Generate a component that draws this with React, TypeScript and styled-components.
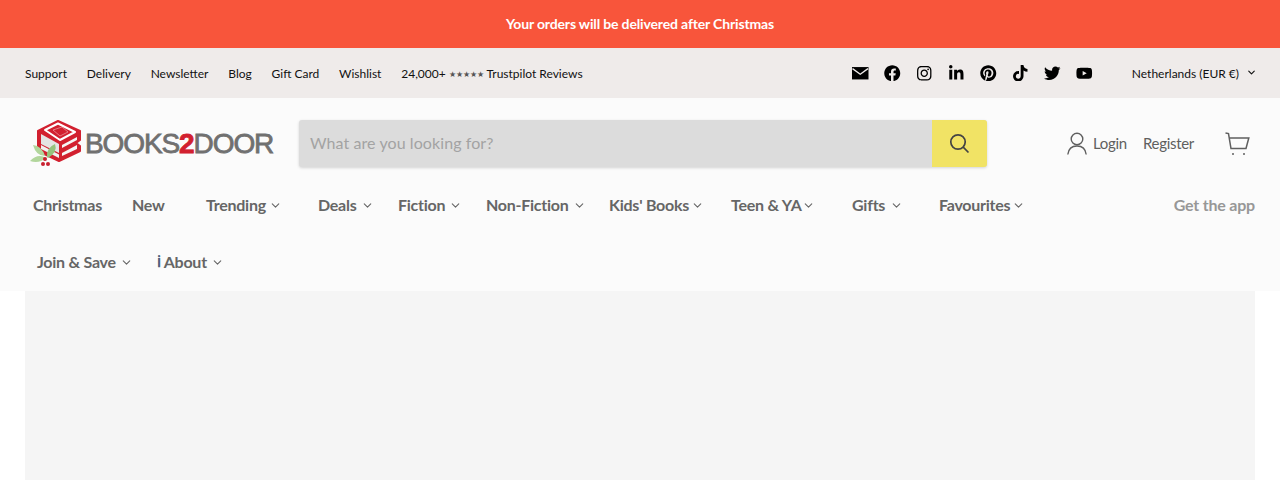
import React from "react";
import styled, { createGlobalStyle } from "styled-components";
import { FaFacebook, FaInstagram, FaLinkedinIn, FaPinterest, FaTiktok, FaTwitter, FaYoutube } from "react-icons/fa";
import { FiChevronDown } from "react-icons/fi";

const Global = createGlobalStyle`
  html, body { margin: 0; padding: 0; background: #fff; font-family: Lato, "Liberation Sans", sans-serif; }
  body { height: 480px; overflow: hidden; }
`;
const Banner = styled.div`
  height: 47px; padding-bottom: 1px; background: #f8553b; color: #fff; display: flex; align-items: center; justify-content: center;
  font-size: 14px; font-weight: 700; letter-spacing: -0.15px;
`;
const TopBar = styled.div`
  height: 50px; background: #efebea; display: flex; align-items: center; padding: 0 23px 0 25px; color: #111;
  font-size: 12px;
`;
const TopLinks = styled.nav`
  display: flex; gap: 19.8px; align-items: center; flex: 1;
`;
const TopLink = styled.span`white-space: nowrap;`;
const Stars = styled.span`color: #555; font-size: 8px; vertical-align: 1px;`;
const Socials = styled.div`
  display: flex; gap: 15.5px; align-items: center; margin-right: 39px; color: #000;
  svg { display: block; width: 16.5px; height: 16.5px; }
`;
const Region = styled.div`
  display: flex; align-items: center; gap: 7px; white-space: nowrap;
  svg { width: 11px; height: 11px; stroke-width: 2.5; margin-top: -1px; }
`;
const Header = styled.header`
  height: 193px; background: #fbfbfb; display: flex; flex-direction: column;
`;
const MainRow = styled.div`
  display: flex; align-items: flex-start; padding: 22px 30px 0 29px; height: 81px; box-sizing: border-box;
`;
const Logo = styled.div`
  width: 270px; height: 47px; display: flex; align-items: center; flex-shrink: 0;
  svg { width: 57px; height: 47px; flex-shrink: 0; }
`;
const Wordmark = styled.span`
  font-family: "Liberation Sans", Arial, sans-serif; font-size: 28px; font-weight: 400; color: #707070; letter-spacing: -1.1px;
  -webkit-text-stroke: 0.8px #707070; margin-left: -1px; white-space: nowrap;
  b { color: #d2202f; -webkit-text-stroke: 0.8px #d2202f; font-weight: 700; }
`;
const Search = styled.div`
  width: 688px; height: 47px; display: flex; border-radius: 3px; overflow: hidden; background: #dcdcdc;
  box-shadow: 0 1px 3px rgba(0,0,0,.16); flex-shrink: 0;
`;
const SearchField = styled.div`
  flex: 1; display: flex; align-items: center; padding: 0 0 2px 11px; color: #a3a3a3; font-size: 16px; letter-spacing: 0.08px;
`;
const SearchButton = styled.div`
  width: 55px; background: #f1e365; display: flex; align-items: center; justify-content: center; color: #444;
`;
const Account = styled.div`
  display: flex; align-items: center; height: 47px; margin-left: 80px; color: #5f5f5f; font-size: 15px; flex: 1;
`;
const AccountLink = styled.span<{ $left: number }>`
  display: flex; align-items: center; margin-left: ${p => p.$left}px; white-space: nowrap; letter-spacing: -0.3px;
  span { margin-top: -2px; }
`;
const Cart = styled.span`
  margin-left: auto; display: flex; color: #5f5f5f;
`;
const NavRow = styled.nav<{ $pad: number; $h: number; $top?: number }>`
  display: flex; align-items: center; height: ${p => p.$h}px; box-sizing: border-box;
  padding: ${p => p.$top ?? 0}px 25px 0 ${p => p.$pad}px;
  color: #666; font-size: 16px; font-weight: 700; letter-spacing: -0.25px;
`;
const NavItem = styled.span<{ $w: number }>`
  display: flex; align-items: center; width: ${p => p.$w}px; white-space: nowrap; flex-shrink: 0;
`;
const Caret = styled(FiChevronDown)<{ $gap?: number }>`
  width: 13px; height: 13px; margin-left: ${p => p.$gap ?? 4}px; margin-top: 2px; stroke-width: 2;
`;
const InfoMark = styled.span`
  color: #4d6079; margin-right: 3px;
`;
const GetApp = styled.span`
  margin-left: auto; color: #979797; white-space: nowrap; letter-spacing: -0.2px;
`;
const Content = styled.main`
  height: 189px; margin: 0 25px; background: #f5f5f5;
`;

const nav1: [string, number, boolean, number?][] = [
  ["Christmas", 99, false], ["New", 74, false], ["Trending", 112, true, 3], ["Deals", 80, true],
  ["Fiction", 88, true], ["Non-Fiction", 123, true], ["Kids' Books", 122, true, 2], ["Teen & YA", 121, true, 0],
  ["Gifts", 87, true, 5], ["Favourites", 100, true, 2],
];

const BookLogo = () => (
  <svg viewBox="0 0 57 47">
    <path d="M29 1 L51 11 V20 L47 23 L51 26 V31 L30 41 L9 31 V11 Z" fill="#d2202f" stroke="#d2202f" strokeWidth="2" strokeLinejoin="round" />
    <path d="M16 10 L29 3.5 L46 12 L31 20 Z" fill="#d2202f" stroke="#fff" strokeWidth="2" strokeLinejoin="round" />
    <path d="M24 10 L33 7 L39 12 L31 16 Z" fill="#d2202f" stroke="#f6d0d3" strokeWidth=".5" />
    <path d="M12 14 L30 24 V33 L12 24 Z" fill="#e4e4e4" />
    <path d="M12 25 L30 34.5 V38 L12 29 Z" fill="#f0f0f0" />
    <path d="M33 25 L48 17 V20 L33 28 Z M33 33 L48 25 V29 L33 36 Z" fill="#f5f5f5" />
    <path d="M1 41 Q9 33 17 38 Q10 44 1 41 Z M4 25 Q13 26 16 36 Q7 36 4 25 Z" fill="#b2d69c" />
    <path d="M18 37 Q17 28 26 24 Q29 32 19 38 Z" fill="#96c27d" />
    <circle cx="16" cy="39" r="2" fill="#c8202f" /><circle cx="14" cy="44" r="2" fill="#c8202f" /><circle cx="19" cy="44" r="2" fill="#c8202f" />
  </svg>
);

const MailIcon = () => (
  <svg viewBox="0 0 16 16"><path d="M0 2 H16 V14 H0 Z" fill="#000" /><path d="M0.5 3.5 L8 9 L15.5 3.5" fill="none" stroke="#efebea" strokeWidth="1.3" /></svg>
);

export default function App() {
  return (
    <>
      <Global />
      <Banner>Your orders will be delivered after Christmas</Banner>
      <TopBar>
        <TopLinks>
          {["Support", "Delivery", "Newsletter", "Blog", "Gift Card", "Wishlist"].map(t => <TopLink key={t}>{t}</TopLink>)}
          <TopLink>24,000+ <Stars>★★★★★</Stars> Trustpilot Reviews</TopLink>
        </TopLinks>
        <Socials>
          <MailIcon />
          <FaFacebook /><FaInstagram /><FaLinkedinIn /><FaPinterest /><FaTiktok /><FaTwitter /><FaYoutube />
        </Socials>
        <Region>Netherlands (EUR €) <FiChevronDown /></Region>
      </TopBar>
      <Header>
        <MainRow>
          <Logo><BookLogo /><Wordmark>BOOKS<b>2</b>DOOR</Wordmark></Logo>
          <Search>
            <SearchField>What are you looking for?</SearchField>
            <SearchButton>
              <svg width="21" height="21" viewBox="0 0 21 21" fill="none" stroke="currentColor" strokeWidth="1.7"><circle cx="9" cy="9" r="7.2" /><path d="M14.2 14.2 L19.5 19.5" /></svg>
            </SearchButton>
          </Search>
          <Account>
            <AccountLink $left={0}>
              <svg width="20" height="23" viewBox="0 0 20 23" fill="none" stroke="currentColor" strokeWidth="1.4" style={{ marginRight: 6 }}><circle cx="10" cy="7" r="5.8" /><path d="M0.8 22.5 C1.5 16.5 5 14 10 14 C15 14 18.5 16.5 19.2 22.5" /></svg>
              <span>Login</span>
            </AccountLink>
            <AccountLink $left={16}><span>Register</span></AccountLink>
            <Cart>
              <svg width="25" height="24" viewBox="0 0 25 24" fill="none" stroke="currentColor" strokeWidth="1.5"><path d="M0.5 1 L3.5 1.6 L6 16.5 L21 16.5 L23.8 6 L4.6 6" /><circle cx="8" cy="22" r="1" fill="currentColor" stroke="none" /><circle cx="19" cy="22" r="1" fill="currentColor" stroke="none" /></svg>
            </Cart>
          </Account>
        </MainRow>
        <NavRow $pad={33} $h={50}>
          {nav1.map(([t, w, c, g]) => <NavItem key={t} $w={w}>{t}{c && <Caret $gap={g} />}</NavItem>)}
          <GetApp>Get the app</GetApp>
        </NavRow>
        <NavRow $pad={37} $h={62} $top={2}>
          <NavItem $w={120}>Join &amp; Save<Caret /></NavItem>
          <NavItem $w={80}><InfoMark>ℹ</InfoMark>About<Caret /></NavItem>
        </NavRow>
      </Header>
      <Content />
    </>
  );
}
